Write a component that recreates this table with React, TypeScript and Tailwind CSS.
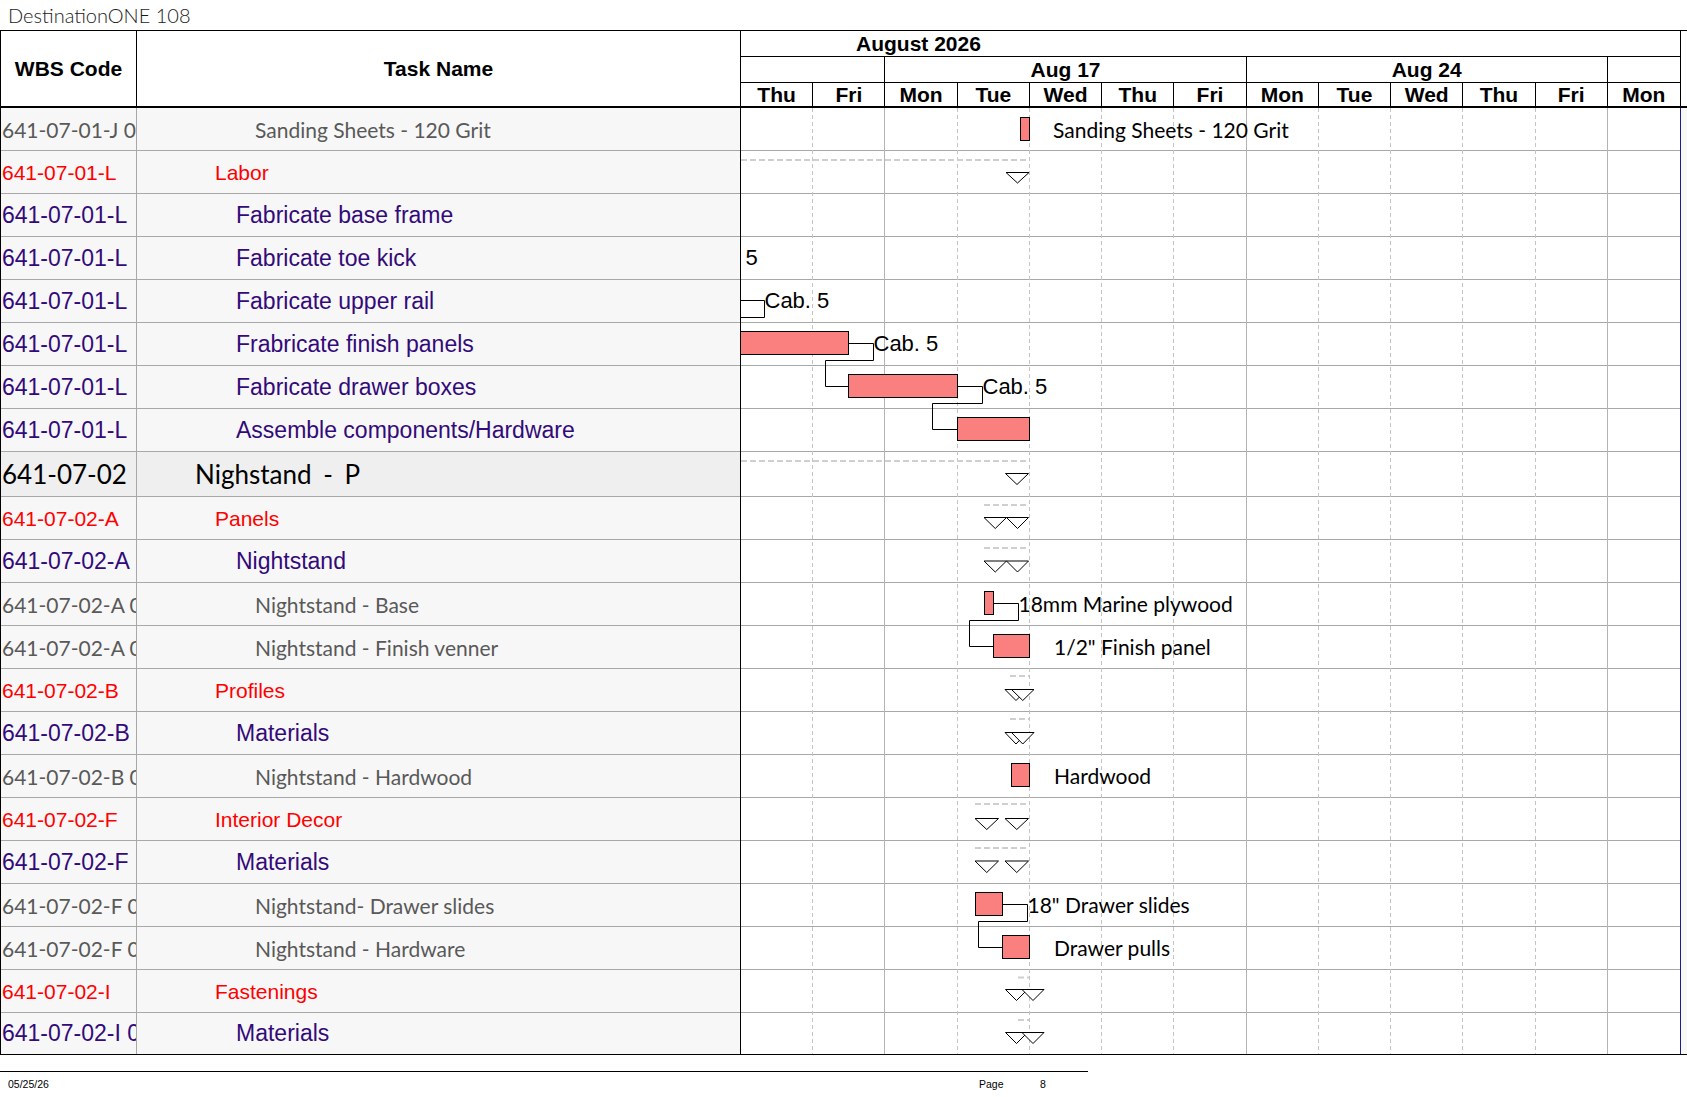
import React from "react";

type Kind = "item" | "group" | "task" | "top";

const rows: { wbs: string; name: string; kind: Kind }[] = [
  { wbs: "641-07-01-J 01", name: "Sanding Sheets - 120 Grit", kind: "item" },
  { wbs: "641-07-01-L", name: "Labor", kind: "group" },
  { wbs: "641-07-01-L", name: "Fabricate base frame", kind: "task" },
  { wbs: "641-07-01-L", name: "Fabricate toe kick", kind: "task" },
  { wbs: "641-07-01-L", name: "Fabricate upper rail", kind: "task" },
  { wbs: "641-07-01-L", name: "Frabricate finish panels", kind: "task" },
  { wbs: "641-07-01-L", name: "Fabricate drawer boxes", kind: "task" },
  { wbs: "641-07-01-L", name: "Assemble components/Hardware", kind: "task" },
  { wbs: "641-07-02", name: "Nighstand - P", kind: "top" },
  { wbs: "641-07-02-A", name: "Panels", kind: "group" },
  { wbs: "641-07-02-A", name: "Nightstand", kind: "task" },
  { wbs: "641-07-02-A 01", name: "Nightstand - Base", kind: "item" },
  { wbs: "641-07-02-A 02", name: "Nightstand - Finish venner", kind: "item" },
  { wbs: "641-07-02-B", name: "Profiles", kind: "group" },
  { wbs: "641-07-02-B", name: "Materials", kind: "task" },
  { wbs: "641-07-02-B 01", name: "Nightstand - Hardwood", kind: "item" },
  { wbs: "641-07-02-F", name: "Interior Decor", kind: "group" },
  { wbs: "641-07-02-F", name: "Materials", kind: "task" },
  { wbs: "641-07-02-F 01", name: "Nightstand- Drawer slides", kind: "item" },
  { wbs: "641-07-02-F 02", name: "Nightstand - Hardware", kind: "item" },
  { wbs: "641-07-02-I", name: "Fastenings", kind: "group" },
  { wbs: "641-07-02-I 01", name: "Materials", kind: "task" },
];

const wbsCls: Record<Kind, string> = {
  item: "font-['Lato',sans-serif] text-[21px] text-[#595959]",
  group: "font-['Liberation_Sans',Arial,sans-serif] text-[21px] text-[#ff0000]",
  task: "font-['Liberation_Sans',Arial,sans-serif] text-[23px] text-[#330a7a]",
  top: "font-['Lato',sans-serif] text-[26px] text-black",
};

const nameCls: Record<Kind, string> = {
  item: "pl-[118px] font-['Lato',sans-serif] text-[21px] text-[#595959]",
  group: "pl-[78px] font-['Liberation_Sans',Arial,sans-serif] text-[21px] text-[#ff0000]",
  task: "pl-[99px] font-['Liberation_Sans',Arial,sans-serif] text-[23px] text-[#330a7a]",
  top: "pl-[58px] font-['Lato',sans-serif] text-[26px] text-black [word-spacing:5px]",
};

const rowH = (i: number) =>
  i === 8 ? "h-[45px] border-b" : i === rows.length - 1 ? "h-[41px]" : "h-[43px] border-b";

const days = ["Thu", "Fri", "Mon", "Tue", "Wed", "Thu", "Fri", "Mon", "Tue", "Wed", "Thu", "Fri", "Mon"];

const X = (x: number) => x - 741;
const Y = (y: number) => y - 108;
const DW = 939 / 13;

const bars: [number, number, number, number][] = [
  [1020, 1029, 117, 140],
  [735, 848, 331, 354],
  [848, 957, 374, 397],
  [957, 1029, 417, 440],
  [984, 993, 591, 614],
  [993, 1029, 634, 657],
  [1011, 1029, 763, 786],
  [975, 1002, 892, 915],
  [1002, 1029, 935, 958],
];

const links: [number, number][][] = [
  [[735, 300.5], [764.5, 300.5], [764.5, 317.5], [735, 317.5]],
  [[848, 343.5], [873.5, 343.5], [873.5, 360.5], [825.5, 360.5], [825.5, 386.5], [848, 386.5]],
  [[957, 386.5], [982.5, 386.5], [982.5, 403.5], [932.5, 403.5], [932.5, 429.5], [957, 429.5]],
  [[993, 603.5], [1018.5, 603.5], [1018.5, 620.5], [969.5, 620.5], [969.5, 646.5], [993, 646.5]],
  [[1002, 904.5], [1027.5, 904.5], [1027.5, 921.5], [978.5, 921.5], [978.5, 947.5], [1002, 947.5]],
];

const dashes: [number, number, number][] = [
  [741, 1029, 160],
  [741, 1029, 461],
  [984, 1029, 505],
  [984, 1029, 548],
  [1010, 1029, 676],
  [1010, 1029, 719],
  [975, 1029, 804],
  [975, 1029, 848],
  [1018, 1029, 977.5],
  [1018, 1029, 1020],
];

// [left, right, top, bottom]
const tris: [number, number, number, number][] = [
  [1006, 1029, 172.5, 183],
  [1005.5, 1028.5, 473.5, 484.5],
  [984, 1006.5, 517.5, 528.5],
  [1006.5, 1028.5, 517.5, 528.5],
  [984, 1006.5, 561, 572],
  [1006.5, 1028.5, 561, 572],
  [1005, 1027, 689.5, 700.5],
  [1011.5, 1034, 689.5, 700.5],
  [1005, 1027, 732.5, 744],
  [1011.5, 1034, 732.5, 744],
  [975, 998.5, 818.5, 829.5],
  [1005, 1028.5, 818.5, 829.5],
  [975, 998.5, 861, 872.5],
  [1005, 1028.5, 861, 872.5],
  [1005.5, 1027.5, 989.5, 1000.5],
  [1022, 1044, 989.5, 1000.5],
  [1005.5, 1027.5, 1032.5, 1043.5],
  [1022, 1044, 1032.5, 1043.5],
];

const ARIAL = "'Liberation Sans', Arial, sans-serif";
const LATO = "Lato, sans-serif";

const labels: { x: number; y: number; t: string; f: "a" | "l"; end?: boolean }[] = [
  { x: 1053, y: 129, t: "Sanding Sheets - 120 Grit", f: "l" },
  { x: 757.7, y: 257.5, t: "Cab. 5", f: "a", end: true },
  { x: 764.5, y: 300.5, t: "Cab. 5", f: "a" },
  { x: 873.5, y: 343, t: "Cab. 5", f: "a" },
  { x: 982.5, y: 386, t: "Cab. 5", f: "a" },
  { x: 1018.5, y: 603, t: "18mm Marine plywood", f: "l" },
  { x: 1054, y: 646, t: '1/2" Finish panel', f: "l" },
  { x: 1054, y: 775, t: "Hardwood", f: "l" },
  { x: 1027.5, y: 904, t: '18" Drawer slides', f: "l" },
  { x: 1054, y: 947, t: "Drawer pulls", f: "l" },
];

function ChartDrawing() {
  return (
    <svg width={939} height={946} className="absolute left-0 top-0 overflow-hidden">
      {Array.from({ length: 12 }).map((_, i) => {
        const x = Math.round(DW * (i + 1)) - 0.5;
        const solid = i + 1 === 2 || i + 1 === 7 || i + 1 === 12;
        return (
          <line
            key={i}
            x1={x}
            x2={x}
            y1={0}
            y2={946}
            stroke={solid ? "#b4b4b4" : "#c4c4c4"}
            strokeWidth={1}
            strokeDasharray={solid ? undefined : "4 3"}
          />
        );
      })}
      {dashes.map(([a, b, y], i) => (
        <line key={i} x1={X(a)} x2={X(b)} y1={Y(y)} y2={Y(y)} stroke="#cfcfcf" strokeWidth={2} strokeDasharray="6 3" />
      ))}
      {links.map((pts, i) => (
        <polyline
          key={i}
          points={pts.map(([x, y]) => `${X(x)},${Y(y)}`).join(" ")}
          fill="none"
          stroke="#000"
          strokeWidth={1}
        />
      ))}
      {bars.map(([x1, x2, y1, y2], i) => (
        <rect
          key={i}
          x={X(x1) + 0.5}
          y={Y(y1) + 0.5}
          width={x2 - x1}
          height={y2 - y1}
          fill="#fa8080"
          stroke="#000"
          strokeWidth={1}
        />
      ))}
      {tris.map(([l, r, t, b], i) => (
        <polygon
          key={i}
          points={`${X(l)},${Y(t)} ${X(r)},${Y(t)} ${X((l + r) / 2)},${Y(b)}`}
          fill="#fff"
          stroke="#000"
          strokeWidth={1}
        />
      ))}
      {labels.map((lb, i) => (
        <text
          key={i}
          x={X(lb.x)}
          y={Y(lb.y)}
          dominantBaseline="central"
          textAnchor={lb.end ? "end" : "start"}
          fontFamily={lb.f === "a" ? ARIAL : LATO}
          fontSize={lb.f === "a" ? 22 : 21}
          fill="#000"
        >
          {lb.t}
        </text>
      ))}
    </svg>
  );
}

export default function App() {
  return (
    <div className="w-[1687px] h-[1097px] bg-white overflow-hidden font-['Liberation_Sans',Arial,sans-serif] text-black">
      <div className="h-[30px] pl-[8px] flex items-center font-['Lato',sans-serif] font-light text-[20px] leading-none text-[#1a1a1a]">
        DestinationONE 108
      </div>

      <div className="w-[1687px] border-t border-b border-black flex flex-col">
        {/* Header */}
        <div className="flex h-[77px] border-b-2 border-black">
          <div className="w-[740px] border-l border-black grid grid-cols-[136px_603px]">
            <div className="border-r border-black flex items-center justify-center text-[21px] font-bold leading-none">
              WBS Code
            </div>
            <div className="flex items-center justify-center text-[21px] font-bold leading-none">Task Name</div>
          </div>
          <div className="w-[941px] border-l border-r border-black flex flex-col">
            <div className="h-[26px] border-b border-black flex items-center pl-[115px] text-[21px] font-bold leading-none">
              August 2026
            </div>
            <div className="h-[26px] border-b border-black grid grid-cols-[repeat(13,minmax(0,1fr))] text-[21px] font-bold leading-none">
              <div className="col-span-2 border-r border-black" />
              <div className="col-span-5 border-r border-black flex items-center justify-center">Aug 17</div>
              <div className="col-span-5 border-r border-black flex items-center justify-center">Aug 24</div>
              <div className="col-span-1" />
            </div>
            <div className="h-[23px] grid grid-cols-[repeat(13,minmax(0,1fr))] text-[21px] font-bold leading-none">
              {days.map((d, i) => (
                <div
                  key={i}
                  className={
                    i < 12
                      ? "border-r border-black flex items-center justify-center"
                      : "flex items-center justify-center"
                  }
                >
                  {d}
                </div>
              ))}
            </div>
          </div>
          <div className="w-[6px]" />
        </div>

        {/* Body */}
        <div className="flex">
          <div className="w-[740px] border-l border-black flex flex-col">
            {rows.map((r, i) => (
              <div
                key={i}
                className={`${rowH(i)} border-[#a8a8a8] grid grid-cols-[136px_603px] ${
                  r.kind === "top" ? "bg-[#efefef]" : "bg-[#f7f7f7]"
                }`}
              >
                <div
                  className={`border-r border-[#a8a8a8] overflow-hidden whitespace-nowrap flex items-center pl-[1px] leading-none ${wbsCls[r.kind]}`}
                >
                  {r.wbs}
                </div>
                <div className={`overflow-hidden whitespace-nowrap flex items-center leading-none ${nameCls[r.kind]}`}>
                  {r.name}
                </div>
              </div>
            ))}
          </div>
          <div className="w-[941px] border-l border-black border-r border-r-[#1a1a9a] relative flex flex-col">
            {rows.map((_, i) => (
              <div key={i} className={`${rowH(i)} border-[#a8a8a8]`} />
            ))}
            <ChartDrawing />
          </div>
          <div className="w-[6px] bg-[#f8f8f4]" />
        </div>
      </div>

      {/* Footer */}
      <div className="mt-[16px] w-[1088px] border-t border-black flex pt-[7px] text-[10.5px] leading-none">
        <div className="w-[979px] pl-[8px]">05/25/26</div>
        <div className="w-[61px]">Page</div>
        <div>8</div>
      </div>
    </div>
  );
}
